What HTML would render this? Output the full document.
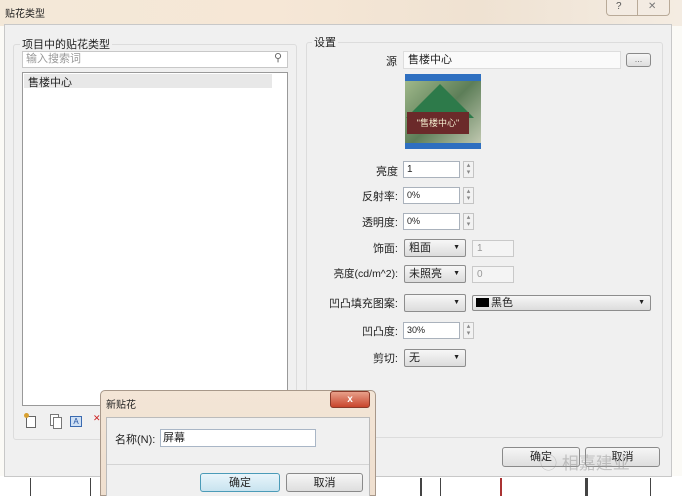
<!DOCTYPE html>
<html><head><meta charset="utf-8"><style>
*{box-sizing:border-box;margin:0;padding:0}
body{width:682px;height:496px;position:relative;overflow:hidden;background:#fbfaf6;font-family:"Liberation Sans","Noto Sans CJK SC",sans-serif;font-size:11px;color:#222}
.a{position:absolute}
.tb{background:#fff;border:1px solid #aab2bc}
.sp{position:absolute;width:11px;height:17px;border:1px solid #c4c4c4;background:#f2f2f2;font-size:7px;color:#888;line-height:7px;text-align:center}
.sel{position:absolute;height:18px;border:1px solid #8d8d8d;border-radius:2px;background:linear-gradient(#f7f7f7,#dcdcdc);padding-left:4px;line-height:16px}
.sel:after{content:"▼";position:absolute;right:5px;top:0;font-size:7px;color:#222}
.dis{position:absolute;height:17px;border:1px solid #c9c9c9;background:#f4f4f4;color:#999;padding-left:4px;line-height:15px;font-size:10px}
.lab{position:absolute;text-align:right;width:120px;font-size:11px}
.btn{position:absolute;height:20px;border:1px solid #8a8a8a;border-radius:3px;background:linear-gradient(#f6f6f6,#dedede);text-align:center;line-height:18px}
</style></head><body>
<div class="a" style="left:0;top:476px;width:682px;height:20px;background:#fff"></div>
<div class="a" style="left:30px;top:478px;width:1px;height:18px;background:#444"></div>
<div class="a" style="left:90px;top:478px;width:1px;height:18px;background:#444"></div>
<div class="a" style="left:420px;top:478px;width:2px;height:18px;background:#444"></div>
<div class="a" style="left:440px;top:478px;width:1px;height:18px;background:#444"></div>
<div class="a" style="left:500px;top:478px;width:2px;height:18px;background:#a33"></div>
<div class="a" style="left:585px;top:478px;width:3px;height:18px;background:#444"></div>
<div class="a" style="left:650px;top:478px;width:1px;height:18px;background:#444"></div>
<div class="a" style="left:0;top:0;width:682px;height:26px;background:linear-gradient(90deg,#f3e8d8,#f6e7d6 40%,#efe2d2 70%,#f4ece2)"></div>
<div class="a" style="left:5px;top:5px;font-size:10px">贴花类型</div>
<div class="a" style="left:606px;top:0;width:64px;height:16px;border:1px solid #b9aa98;border-top:none;border-radius:0 0 4px 4px;background:#f3ebe2"></div>
<div class="a" style="left:637px;top:0;width:1px;height:16px;background:#b9aa98"></div>
<div class="a" style="left:616px;top:1px;font-size:10px;color:#555">?</div>
<div class="a" style="left:648px;top:1px;font-size:10px;color:#777">✕</div>
<div class="a" style="left:4px;top:24px;width:668px;height:453px;background:#f0f0f0;border:1px solid #c8c8c8"></div>
<div class="a" style="left:13px;top:44px;width:284px;height:396px;border:1px solid #dcdcdc;border-radius:3px"></div>
<div class="a" style="left:20px;top:36px;background:#f0f0f0;padding:0 2px;font-size:11px">项目中的贴花类型</div>
<div class="a tb" style="left:22px;top:51px;width:266px;height:17px;border-color:#c8c8c8;color:#999;padding-left:3px;line-height:15px">输入搜索词</div>
<div class="a" style="left:274px;top:51px;font-size:11px;color:#666">⚲</div>
<div class="a tb" style="left:22px;top:72px;width:266px;height:334px;border-color:#999"></div>
<div class="a" style="left:24px;top:74px;width:248px;height:14px;background:#e8e8e8"></div>
<div class="a" style="left:28px;top:74px">售楼中心</div>
<div class="a" style="left:26px;top:416px;width:10px;height:12px;border:1px solid #666;background:#fff"></div>
<div class="a" style="left:24px;top:413px;width:5px;height:5px;background:#d8a030;border-radius:50%"></div>
<div class="a" style="left:50px;top:414px;width:9px;height:12px;border:1px solid #777;background:#fff"></div>
<div class="a" style="left:53px;top:417px;width:9px;height:12px;border:1px solid #777;background:#fff"></div>
<div class="a" style="left:70px;top:416px;width:12px;height:11px;border:1px solid #3a6ab0;background:#cfe0f4;font-size:8px;color:#2050a0;line-height:9px;text-align:center">A</div>
<div class="a" style="left:93px;top:413px;font-size:9px;color:#c22">✕</div>
<div class="a" style="left:306px;top:42px;width:357px;height:396px;border:1px solid #dcdcdc;border-radius:3px"></div>
<div class="a" style="left:312px;top:34px;background:#f0f0f0;padding:0 2px">设置</div>
<div class="a" style="left:386px;top:53px">源</div>
<div class="a tb" style="left:403px;top:51px;width:218px;height:18px;border-color:#ddd;background:#fafafa;padding-left:4px;line-height:16px">售楼中心</div>
<div class="btn" style="left:626px;top:53px;width:25px;height:14px;line-height:10px;font-size:9px;color:#777">...</div>
<div class="a" style="left:405px;top:74px;width:76px;height:75px;background:#2e6fc0"></div>
<div class="a" style="left:405px;top:81px;width:76px;height:62px;background:linear-gradient(135deg,#9fb88a,#5d7e58 50%,#c0c8b0)"></div>
<div class="a" style="left:406px;top:84px;width:0;height:0;border-left:34px solid transparent;border-right:34px solid transparent;border-bottom:34px solid #2d7a4a"></div>
<div class="a" style="left:407px;top:112px;width:62px;height:22px;background:#6b2a2a;color:#f4eed0;font-size:9px;line-height:22px;text-align:center">"售楼中心"</div>
<div class="lab" style="left:278px;top:163px">亮度</div>
<div class="a tb" style="left:403px;top:161px;width:57px;height:17px;font-size:10px;padding-left:3px;line-height:15px">1</div>
<div class="sp" style="left:463px;top:161px">▴<br>▾</div>
<div class="lab" style="left:278px;top:188px">反射率:</div>
<div class="a tb" style="left:403px;top:187px;width:57px;height:17px;font-size:9px;padding-left:3px;line-height:15px">0%</div>
<div class="sp" style="left:463px;top:187px">▴<br>▾</div>
<div class="lab" style="left:278px;top:214px">透明度:</div>
<div class="a tb" style="left:403px;top:213px;width:57px;height:17px;font-size:9px;padding-left:3px;line-height:15px">0%</div>
<div class="sp" style="left:463px;top:213px">▴<br>▾</div>
<div class="lab" style="left:278px;top:240px">饰面:</div>
<div class="sel" style="left:404px;top:239px;width:62px">粗面</div>
<div class="dis" style="left:472px;top:240px;width:42px">1</div>
<div class="lab" style="left:278px;top:266px;font-size:10.5px">亮度(cd/m^2):</div>
<div class="sel" style="left:404px;top:265px;width:62px">未照亮</div>
<div class="dis" style="left:472px;top:266px;width:42px">0</div>
<div class="lab" style="left:278px;top:295px">凹凸填充图案:</div>
<div class="sel" style="left:404px;top:294px;width:62px"></div>
<div class="sel" style="left:472px;top:295px;width:179px;height:16px;line-height:14px;padding-left:3px"><span style="display:inline-block;width:13px;height:9px;background:#000;vertical-align:-1px;margin-right:2px"></span>黑色</div>
<div class="lab" style="left:278px;top:323px">凹凸度:</div>
<div class="a tb" style="left:403px;top:322px;width:57px;height:17px;font-size:9px;padding-left:3px;line-height:15px">30%</div>
<div class="sp" style="left:463px;top:322px">▴<br>▾</div>
<div class="lab" style="left:278px;top:350px">剪切:</div>
<div class="sel" style="left:404px;top:349px;width:62px">无</div>
<div class="btn" style="left:502px;top:447px;width:78px">确定</div>
<div class="btn" style="left:585px;top:447px;width:75px">取消</div>
<div class="a" style="left:540px;top:449px;font-size:17px;color:rgba(150,150,150,.5)">◯ 相嘉建业</div>
<div class="a" style="left:100px;top:390px;width:276px;height:106px;background:linear-gradient(#f3e5d6,#efdfcf);border:1px solid #a8988a;border-radius:5px 5px 0 0"></div>
<div class="a" style="left:106px;top:396px;font-size:10px">新贴花</div>
<div class="a" style="left:330px;top:391px;width:40px;height:17px;border-radius:3px;border:1px solid #8a3a2a;background:linear-gradient(#e8a08a,#c8452c);color:#fff;font-size:10px;text-align:center;line-height:15px;font-weight:bold">x</div>
<div class="a" style="left:106px;top:417px;width:264px;height:79px;background:#f0f0f0;border:1px solid #bbb"></div>
<div class="a" style="left:107px;top:464px;width:262px;height:32px;background:#f0f0f0;border-top:1px solid #d4d4d4"></div>
<div class="a" style="left:115px;top:431px;font-size:11px">名称(N):</div>
<div class="a tb" style="left:160px;top:429px;width:156px;height:18px;border-color:#a9b6c6;padding-left:2px;line-height:16px">屏幕</div>
<div class="btn" style="left:200px;top:473px;width:80px;height:19px;border-color:#4b9bb8;background:linear-gradient(#e9f5fb,#c8e3ef)">确定</div>
<div class="btn" style="left:286px;top:473px;width:77px;height:19px">取消</div>
</body></html>
